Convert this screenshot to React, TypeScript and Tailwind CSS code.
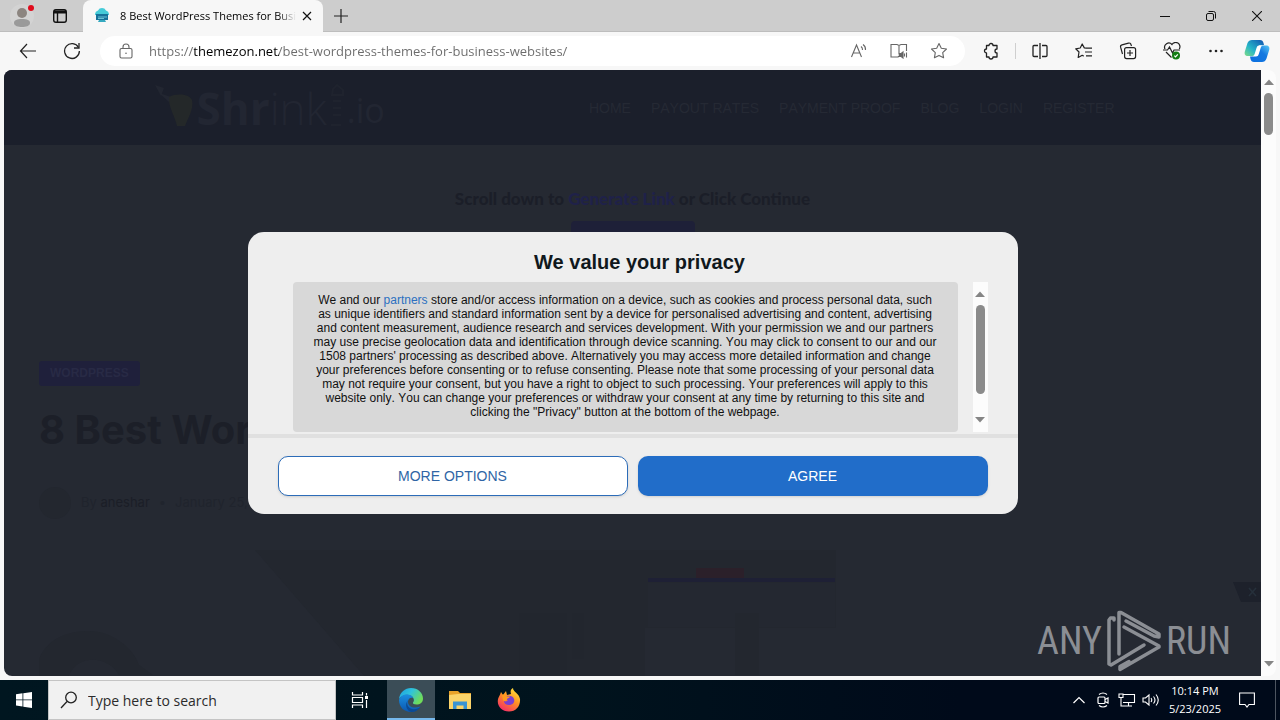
import { ReactNode, useState } from "react";

type IconButtonProps = {
    label: string,
    className?: string,
    children: ReactNode
}

const navLinks = ["HOME", "PAYOUT RATES", "PAYMENT PROOF", "BLOG", "LOGIN", "REGISTER"];

export default function App() {
    const [consentOpen, setConsentOpen] = useState<boolean>(true);

    return (
        <div className="flex h-screen flex-col overflow-hidden bg-[#f7f7f7] font-['Open_Sans',sans-serif]">
            <TabStrip />
            <Toolbar />
            <div className="mx-1 mb-1 flex min-h-0 flex-1">
                <div className="relative min-w-0 flex-1 overflow-hidden rounded-l-lg bg-[#252932]">
                    <Site />
                    {consentOpen && (
                        <div className="absolute inset-0 flex items-center justify-center">
                            <ConsentDialog hide={() => setConsentOpen(false)} />
                        </div>
                    )}
                    <Watermark />
                </div>
                <Scrollbar className="rounded-r-lg" thumb="h-[42px]" />
            </div>
            <Taskbar />
        </div>
    )
}

function IconButton(props: IconButtonProps) {
    return (
        <button type="button" aria-label={props.label} className={`flex shrink-0 items-center justify-center ${props.className ?? ""}`}>
            {props.children}
        </button>
    )
}

function TabStrip() {
    return (
        <div className="flex h-8 shrink-0 items-stretch border-b border-[#bdbdbd] bg-[#cdcdcd]">
            <IconButton label="Profile" className="w-11">
                <svg width="30" height="28" viewBox="0 0 30 28">
                    <circle cx="15" cy="14" r="12" fill="#d3d3d3" />
                    <circle cx="15" cy="11" r="5" fill="#8c8580" />
                    <path d="M7 21c0-3 3-4 8-4s8 1 8 4-4 4-8 4-8-1-8-4z" fill="#9a9a9a" />
                    <circle cx="24" cy="6" r="3" fill="#e00b1c" />
                </svg>
            </IconButton>
            <IconButton label="Tab actions" className="w-[31px]">
                <svg width="16" height="16" viewBox="0 0 16 16" fill="none" stroke="#111" strokeWidth="1.4">
                    <rect x="1.7" y="1.7" width="12.6" height="12.6" rx="2.2" />
                    <path d="M2 4h12" strokeWidth="3" />
                    <path d="M5.5 5v9" />
                </svg>
            </IconButton>
            <div className="ml-2 -mb-px flex w-60 items-center rounded-t-lg bg-[#f7f7f7] pl-[11px] pr-2">
                <svg width="16" height="16" viewBox="0 0 16 16" className="shrink-0">
                    <path d="M1 6a4 4 0 0 1 3-3.500A4.500 4.500 0 0 1 12 2.500 4 4 0 0 1 15 6v1H1z" fill="#45cbd8" />
                    <path d="M2 6h12v6H2z" fill="#17729a" />
                    <path d="M4 9h9M4 10.500h6" stroke="#7fd6e4" strokeWidth=".8" />
                    <path d="M5 12h6l1 2H4z" fill="#35a9c0" />
                </svg>
                <span className="ml-[10px] flex-1 overflow-hidden whitespace-nowrap text-[11px] leading-4 text-black [mask-image:linear-gradient(to_right,black_158px,transparent_176px)]">
                    8 Best WordPress Themes for Business Websites
                </span>
                <IconButton label="Close tab" className="size-4">
                    <svg width="10" height="10" viewBox="0 0 10 10" stroke="#111" strokeWidth="1.2">
                        <path d="M1 1l8 8M9 1l-8 8" />
                    </svg>
                </IconButton>
            </div>
            <IconButton label="New tab" className="w-9">
                <svg width="14" height="14" viewBox="0 0 14 14" stroke="#222" strokeWidth="1.2">
                    <path d="M7 0v14M0 7h14" />
                </svg>
            </IconButton>
            <div className="flex-1" />
            <IconButton label="Minimize" className="w-[46px]">
                <svg width="10" height="10" viewBox="0 0 10 10" stroke="#111"><path d="M0 5.500h10" /></svg>
            </IconButton>
            <IconButton label="Restore" className="w-[46px]">
                <svg width="10" height="10" viewBox="0 0 10 10" fill="none" stroke="#111">
                    <rect x=".5" y="2.500" width="7" height="7" rx="1.500" />
                    <path d="M2.500 .5h5a2 2 0 0 1 2 2v5" />
                </svg>
            </IconButton>
            <IconButton label="Close" className="w-[46px]">
                <svg width="10" height="10" viewBox="0 0 10 10" stroke="#111" strokeWidth="1.1"><path d="M0 0l10 10M10 0L0 10" /></svg>
            </IconButton>
        </div>
    )
}

function Toolbar() {
    return (
        <div className="flex h-[38px] shrink-0 items-center pl-2 text-[#222]">
            <IconButton label="Back" className="w-10">
                <svg width="18" height="16" viewBox="0 0 18 16" fill="none" stroke="currentColor" strokeWidth="1.2">
                    <path d="M17 8H1.500M8 1L1.500 8 8 15" />
                </svg>
            </IconButton>
            <IconButton label="Refresh" className="ml-1 w-10">
                <svg width="18" height="18" viewBox="0 0 18 18" fill="none" stroke="currentColor" strokeWidth="1.3">
                    <path d="M15.500 5.500A7.400 7.400 0 1 0 16.400 9" />
                    <path d="M16 1v5h-5" />
                </svg>
            </IconButton>
            <form className="ml-2 flex h-[30px] min-w-0 flex-1 items-center rounded-full bg-white pl-4 pr-[6px]" onSubmit={(e) => e.preventDefault()}>
                <IconButton label="View site information" className="w-5 text-[#666]">
                    <svg width="14" height="16" viewBox="0 0 14 16" fill="none" stroke="currentColor" strokeWidth="1.100">
                        <rect x="1" y="5.500" width="12" height="9.500" rx="1.500" />
                        <path d="M4 5.500V4a3 3 0 0 1 6 0v1.500" />
                        <circle cx="7" cy="10.200" r=".8" fill="currentColor" stroke="none" />
                    </svg>
                </IconButton>
                <input
                    type="text"
                    aria-label="Address and search bar"
                    defaultValue="https://themezon.net/best-wordpress-themes-for-business-websites/"
                    spellCheck={false}
                    className="ml-[13px] min-w-0 flex-1 bg-[linear-gradient(to_right,#6b6b6b_45px,#000_45px,#000_130px,#6b6b6b_130px)] bg-clip-text text-[13px] leading-5 text-transparent outline-none"
                />
                <IconButton label="Read aloud" className="w-10 text-[#666]">
                    <svg width="18" height="16" viewBox="0 0 18 16" fill="none" stroke="currentColor" strokeWidth="1.100">
                        <path d="M1.500 14L6.500 2l5 12M3.200 10h6.600" />
                        <path d="M11 3.500a4 4 0 0 1 1.500 3.500M13 1.500a6 6 0 0 1 2.500 5.500" />
                    </svg>
                </IconButton>
                <IconButton label="Immersive reader" className="w-10 text-[#666]">
                    <svg width="18" height="16" viewBox="0 0 18 16" fill="none" stroke="currentColor" strokeWidth="1.100">
                        <path d="M9 2.500v9M8 14H1V1.500h6l2 1 2-1h5.500V8M8 14l1-1" />
                        <path d="M9.500 10.500h1.700L13 9v6l-1.800-1.500H9.500z" fill="currentColor" />
                        <path d="M14.500 10.500v3M16.500 9.500v5" />
                    </svg>
                </IconButton>
                <IconButton label="Add to favorites" className="w-10 text-[#666]">
                    <svg width="18" height="18" viewBox="0 0 18 18" fill="none" stroke="currentColor" strokeWidth="1.100" strokeLinejoin="round">
                        <path d="M9 1.500l2.300 4.700 5.200.8-3.800 3.600.9 5.200L9 13.400l-4.600 2.400.9-5.200L1.500 7l5.200-.8z" />
                    </svg>
                </IconButton>
            </form>
            <IconButton label="Extensions" className="ml-2 w-9">
                <svg width="16" height="18" viewBox="0 0 16 18" fill="none" stroke="currentColor" strokeWidth="1.300" strokeLinejoin="round">
                    <path d="M3.500 3.500H6a2 2 0 0 1 4 0h4V7a2 2 0 0 0 0 4v4h-4a2 2 0 0 1-4 0H3.500v-4a2 2 0 0 1 0-4z" />
                </svg>
            </IconButton>
            <div className="ml-[6px] h-4 w-px bg-[#cfcfcf]" />
            <IconButton label="Split screen" className="ml-[6px] w-9">
                <svg width="16" height="16" viewBox="0 0 16 16" fill="none" stroke="currentColor" strokeWidth="1.300">
                    <path d="M6 2.500H2a1 1 0 0 0-1 1v9a1 1 0 0 0 1 1h4M10 2.500h4a1 1 0 0 1 1 1v9a1 1 0 0 1-1 1h-4M8 0v16" />
                </svg>
            </IconButton>
            <IconButton label="Favorites" className="ml-2 w-9">
                <svg width="18" height="16" viewBox="0 0 18 16" fill="none" stroke="currentColor" strokeWidth="1.200" strokeLinejoin="round">
                    <path d="M11 5.200l-1.700-.3L7.200 1 5.200 5l-4.500.8L4 9l-.8 5.500 4-2.200 1.500.8" />
                    <path d="M11 5.200h6M10 9h7M11 12.800h6" />
                </svg>
            </IconButton>
            <IconButton label="Collections" className="ml-2 w-9">
                <svg width="18" height="18" viewBox="0 0 18 18" fill="none" stroke="currentColor" strokeWidth="1.200">
                    <rect x="5.600" y="5.600" width="11" height="11" rx="2" />
                    <path d="M11 8v6M8 11h6M3.500 12L1.600 5.200a2 2 0 0 1 1.400-2.400l6.500-1.700a2 2 0 0 1 2.500 1.500L12.500 4" />
                </svg>
            </IconButton>
            <IconButton label="Browser essentials" className="ml-2 w-9">
                <svg width="18" height="18" viewBox="0 0 18 18" fill="none" stroke="currentColor" strokeWidth="1.200">
                    <path d="M2 7a4.200 4.200 0 0 1 7-4.500A4.200 4.200 0 0 1 16.300 7M3 10l5.500 5.500" />
                    <path d="M0 8h4.500L6.500 5l3 6 1.500-3h6" />
                    <circle cx="13" cy="13.500" r="4" fill="#137c13" stroke="none" />
                    <path d="M11.300 13.600l1.200 1.200 2.300-2.500" stroke="#fff" />
                </svg>
            </IconButton>
            <IconButton label="Settings and more" className="ml-2 w-9">
                <svg width="14" height="4" viewBox="0 0 14 4" fill="currentColor">
                    <circle cx="1.500" cy="2" r="1.300" /><circle cx="7" cy="2" r="1.300" /><circle cx="12.500" cy="2" r="1.300" />
                </svg>
            </IconButton>
            <IconButton label="Copilot" className="w-[46px]">
                <svg width="26" height="24" viewBox="0 0 26 24">
                    <defs>
                        <linearGradient id="copilotLeft" x1="0" y1="1" x2="1" y2="0">
                            <stop offset="0" stopColor="#7fdc86" /><stop offset=".4" stopColor="#25b5c8" /><stop offset="1" stopColor="#1152b0" />
                        </linearGradient>
                        <linearGradient id="copilotRight" x1="0" y1="1" x2="1" y2="0">
                            <stop offset="0" stopColor="#0a6fe0" /><stop offset=".6" stopColor="#1478e0" /><stop offset="1" stopColor="#59c9f5" />
                        </linearGradient>
                    </defs>
                    <path d="M8 1h8c2 0 3 1 3.500 3l.5 2h-3c-2 0-3 1-3.500 3l-1.500 5c-.5 2-1.500 3-4 3H4c-3 0-4-2-3-5l2.500-8C4.300 2 6 1 8 1z" fill="url(#copilotLeft)" />
                    <path d="M18 23h-8c-2 0-3-1-3.500-3L6 17.500h2.500c2 0 3-1 3.500-3l1.500-5c.5-2 1.500-3 4-3H22c3 0 4 2 3 5l-2.500 8c-.8 2.500-2.500 3.500-4.500 3.500z" fill="url(#copilotRight)" />
                    <path d="M12.500 9l-1.700 5.500c-.4 1.300-1 2.200-1.800 3h3c1.500 0 2.300-.8 2.800-2.500l1.700-5.500c.4-1.400.9-2.300 1.800-3h-3c-1.500 0-2.300.8-2.800 2.500z" fill="#fff" />
                </svg>
            </IconButton>
        </div>
    )
}

function Site() {
    return (
        <div className="flex flex-col">
            <header className="h-[75px] bg-[#1b1f2b] px-4">
                <div className="mx-auto flex h-full max-w-[964px] items-center justify-between">
                    <a href="#" className="flex items-center" aria-label="Shrinke.io">
                        <svg width="46" height="50" viewBox="0 0 46 50">
                            <path d="M8 10l12 4-2 5zM4 2l9 3-3 8z" fill="#222631" />
                            <path d="M18 14c8-4 20-3 23 3 2 9-4 18-7 26h-8c-2-10-9-19-8-29z" fill="#242829" />
                        </svg>
                        <span className="text-[44px] leading-[50px] text-[#222632]">
                            <span className="font-bold">Shr</span><span className="font-light">ink</span>
                        </span>
                        <svg width="20" height="50" viewBox="0 0 20 50" fill="none" stroke="#1f232e" strokeWidth="2">
                            <path d="M6 6l4-4 6 5v5H5zM6 18h8M6 25h8M6 32h8M4 42h10" />
                        </svg>
                        <span className="pt-1 text-[34px] leading-10 text-[#222632]">.io</span>
                    </a>
                    <nav className="flex gap-5 font-['Liberation_Sans',sans-serif] text-sm text-[#252934] [font-kerning:none]">
                        {navLinks.map((link) => <a key={link} href="#">{link}</a>)}
                    </nav>
                </div>
            </header>
            <div className="flex flex-col items-center pt-[42px]">
                <p className="font-['Lato',sans-serif] text-[17px] font-black leading-6 text-[#1b1e28]">
                    Scroll down to <a href="#" className="text-[#1f2149]">Generate Link</a> or Click Continue
                </p>
                <button type="button" aria-label="Continue" className="mt-[10px] h-10 w-[124px] rounded bg-[#1e2038]" />
            </div>
            <main className="mt-[100px] flex flex-col items-start pl-[35px]">
                <a href="#" className="rounded-[3px] bg-[#1f203b] px-[11px] font-['Liberation_Sans',sans-serif] text-[12px] font-bold leading-[25px] text-[#282a45]">WORDPRESS</a>
                <h1 className="mt-5 whitespace-nowrap font-['Inter',sans-serif] text-[40px] font-bold leading-[48px] text-[#1c1f28]">
                    8 Best WordPress Themes
                </h1>
                <div className="mt-[33px] flex h-8 items-center font-['Inter',sans-serif] text-[13px] text-[#20242d]">
                    <span className="size-8 rounded-full bg-[#23272f]" />
                    <span className="ml-[10px]">By <a href="#" className="text-[#1b1e27]">aneshar</a></span>
                    <span className="mx-[9px]">•</span>
                    <time>January 25, 2025</time>
                </div>
                <HeroImage />
            </main>
        </div>
    )
}

function HeroImage() {
    return (
        <svg width="797" height="160" viewBox="0 0 797 160" className="mt-7" aria-hidden="true">
            <path d="M216 3h581v78H606v79H352z" fill="#23272f" />
            <path d="M609 36h187v44H609z" fill="#242831" />
            <rect x="657" y="21" width="48" height="10" fill="#2b202a" />
            <rect x="609" y="31" width="187" height="4" fill="#1e2035" />
            <path d="M0 160V112c8-20 28-28 50-28s44 16 50 34l14 10H80c-8-16-38-24-50 0l-10 32z" fill="#23272f" />
            <path d="M480 66h48v62h-48zM533 66h12v46h-12z" fill="#22262e" />
            <path d="M696 66h24v62h-24z" fill="#23272f" />
        </svg>
    )
}

function ConsentDialog(props: { hide: () => void }) {
    return (
        <div role="dialog" aria-labelledby="consent-title" className="flex w-[770px] max-w-full flex-col rounded-2xl bg-[#eee] font-['Liberation_Sans',sans-serif]">
            <h2 id="consent-title" className="pl-8 pr-[18px] pt-[18px] text-center text-[20px] font-bold leading-6 text-[#10181c]">We value your privacy</h2>
            <div className="mt-2 flex justify-between pl-[45px] pr-[30px]">
                <p className="mr-[15px] h-[150px] flex-1 whitespace-nowrap rounded bg-[#d8d8d8] pt-[11px] text-center text-[12px] leading-[14px] text-[#111] [font-kerning:none]">
                    We and our <a href="#" className="text-[#2c70c0]">partners</a> store and/or access information on a device, such as cookies and process personal data, such<br />
                    as unique identifiers and standard information sent by a device for personalised advertising and content, advertising<br />
                    and content measurement, audience research and services development. With your permission we and our partners<br />
                    may use precise geolocation data and identification through device scanning. You may click to consent to our and our<br />
                    1508 partners' processing as described above. Alternatively you may access more detailed information and change<br />
                    your preferences before consenting or to refuse consenting. Please note that some processing of your personal data<br />
                    may not require your consent, but you have a right to object to such processing. Your preferences will apply to this<br />
                    website only. You can change your preferences or withdraw your consent at any time by returning to this site and<br />
                    clicking the "Privacy" button at the bottom of the webpage.
                </p>
                <Scrollbar thumb="h-[89px]" />
            </div>
            <div className="mt-[2px] grid grid-cols-2 gap-[10px] border-t-4 border-[#e0e0e0] px-[30px] pb-[18px] pt-[18px] text-sm">
                <button type="button" className="h-10 rounded-[10px] border border-[#2c6cb8] bg-white text-[#2f65a5] shadow-sm">MORE OPTIONS</button>
                <button type="button" onClick={props.hide} className="h-10 rounded-[10px] bg-[#216dc9] text-white shadow-sm">AGREE</button>
            </div>
        </div>
    )
}

function Scrollbar(props: { thumb: string, className?: string }) {
    return (
        <div className={`flex w-[15px] shrink-0 flex-col items-center bg-[#fcfcfc] pb-[9px] pt-[9px] ${props.className ?? ""}`} aria-hidden="true">
            <svg width="10" height="6" viewBox="0 0 10 6" fill="#858585"><path d="M0 6l5-5.500L10 6z" /></svg>
            <div className={`mt-2 w-[9px] rounded-full bg-[#8b8b8b] ${props.thumb}`} />
            <div className="flex-1" />
            <svg width="10" height="6" viewBox="0 0 10 6" fill="#858585"><path d="M0 0l5 5.500L10 0z" /></svg>
        </div>
    )
}

function Watermark() {
    return (
        <>
            <div className="absolute bottom-[74px] right-0 flex">
                <svg width="28" height="20" viewBox="0 0 28 20" aria-hidden="true">
                    <path d="M0 0h28v20H8z" fill="#1d212b" />
                    <path d="M16 6l7 8M23 6l-7 8" stroke="#26303b" strokeWidth="1.500" />
                </svg>
            </div>
            <div className="absolute bottom-1 right-[30px] flex items-center gap-1 font-['Roboto_Condensed','Liberation_Sans_Narrow','Roboto',sans-serif] text-[38px] leading-[62px] text-[#8b8e94]">
                <span>ANY</span>
                <svg width="56" height="62" viewBox="0 0 56 62" fill="none" stroke="#8b8e94" strokeWidth="3.500" strokeLinejoin="round" strokeLinecap="round">
                    <path d="M13 44V2.500h2l38 21.500v3l-5-1-28-15" />
                    <path d="M8 10V8H4.500L3 10v44l2 1 33-20" />
                    <path d="M18 17l35 19v1L14 59.500v-3l9-5" />
                </svg>
                <span>RUN</span>
            </div>
        </>
    )
}

function Taskbar() {
    return (
        <footer className="flex h-10 shrink-0 items-stretch bg-[linear-gradient(to_right,#001620,#00131d_45%,#000a1a_75%)] text-white">
            <IconButton label="Start" className="w-12">
                <svg width="16" height="16" viewBox="0 0 16 16" fill="#fff">
                    <path d="M0 2.200L6.500 1.300v6.200H0zM7.300 1.200L16 0v7.500H7.300zM0 8.300h6.500v6.200L0 13.600zM7.300 8.300H16V16l-8.700-1.200z" />
                </svg>
            </IconButton>
            <label className="flex w-72 items-center border border-[#c4c4c4] bg-[#f1f1f1] pl-[11px]">
                <svg width="18" height="18" viewBox="0 0 18 18" fill="none" stroke="#222" strokeWidth="1.300">
                    <circle cx="11" cy="6.500" r="5.300" />
                    <path d="M7 10.500L1 17" />
                </svg>
                <input type="search" aria-label="Search" placeholder="Type here to search" className="ml-[10px] min-w-0 flex-1 text-[14px] text-black outline-none placeholder:text-[#2b2b2b]" />
            </label>
            <IconButton label="Task view" className="w-12">
                <svg width="18" height="16" viewBox="0 0 18 16" fill="none" stroke="#fff" strokeWidth="1.200">
                    <path d="M1.500 0v3h10V0M1.500 16v-3h10v3M1.500 5.500h10v5h-10zM15.500 1v2.500M15.500 8v8" />
                    <path d="M14 4h3v3h-3z" fill="#fff" stroke="none" />
                </svg>
            </IconButton>
            <IconButton label="Microsoft Edge" className="ml-[3px] w-12 border-b-2 border-[#76b9ed] bg-[#3b4d57] pt-[2px]">
                <svg width="24" height="24" viewBox="0 0 24 24">
                    <defs>
                        <linearGradient id="edgeTop" x1="0" y1="0" x2="1" y2=".5">
                            <stop offset="0" stopColor="#1c9fe0" /><stop offset=".5" stopColor="#2fc3dc" /><stop offset="1" stopColor="#6fdc5a" />
                        </linearGradient>
                        <linearGradient id="edgeBody" x1="0" y1="0" x2="0" y2="1">
                            <stop offset="0" stopColor="#1b8fe0" /><stop offset="1" stopColor="#0b57b0" />
                        </linearGradient>
                    </defs>
                    <path d="M0 11C1 4 6 0 12 0c7 0 12 5 12 10.500 0 4-3 6-6.500 6-2.500 0-4-1-3.500-2 1.500-1.500 1-3.500 0-5C11 5 3 6 0 11z" fill="url(#edgeTop)" />
                    <path d="M0 12C1 8 5 6 9 6.500c3 .3 5 2 5 3.500-3-1-5 1-5 4 0 5 6 7 12.500 4.500C19 22 16 24 12 24 5 24 0 19 0 12z" fill="url(#edgeBody)" />
                    <path d="M9 12c-2 4 0 8 4 9 3 .8 6 0 8.500-2.500-2 3.500-5 5.500-9 5.500-4.500-1-7.500-7-3.500-12z" fill="#0c4a94" />
                </svg>
            </IconButton>
            <IconButton label="File Explorer" className="w-[49px]">
                <svg width="22" height="20" viewBox="0 0 22 20">
                    <path d="M0 1h9l2 2h11v16H0z" fill="#e9a32a" />
                    <path d="M0 5l9-1h13v15H0z" fill="#fbd46a" />
                    <path d="M4 11.500h14V19h-3.500v-3.500h-7V19H4z" fill="#3a94d4" />
                </svg>
            </IconButton>
            <IconButton label="Firefox" className="w-[49px]">
                <svg width="24" height="24" viewBox="0 0 24 24">
                    <defs>
                        <linearGradient id="fox" x1=".8" y1="0" x2=".2" y2="1">
                            <stop offset="0" stopColor="#ffe53e" /><stop offset=".45" stopColor="#ff9122" /><stop offset="1" stopColor="#f5266c" />
                        </linearGradient>
                    </defs>
                    <path d="M4 4l2 3 3-4 1 4 4-1c-1-3 0-5 2-6 0 4 6 5 7 11 .6 7-4 12.500-11 12.500S.5 18.500.8 13C1 9 3 8 4 4z" fill="url(#fox)" />
                    <path d="M8 9c2-2 8-2 9 2 1 3-1 6-5 6-3 0-5-1.500-5-4 2 1 3 0 4-1-2 0-3-1-3-3z" fill="#7a3fd0" />
                    <path d="M5 7c2-1 4 0 5 1.500h3c0 1.500-3 1.500-3 3 0 1-2 2-4 1z" fill="#ff9a1f" />
                </svg>
            </IconButton>
            <div className="flex-1" />
            <IconButton label="Show hidden icons" className="w-6">
                <svg width="12" height="8" viewBox="0 0 12 8" fill="none" stroke="#fff" strokeWidth="1.200"><path d="M.5 7L6 1.500 11.500 7" /></svg>
            </IconButton>
            <IconButton label="Meet now" className="w-6">
                <svg width="14" height="16" viewBox="0 0 14 16" fill="none" stroke="#fff" strokeWidth="1.200">
                    <rect x="2" y="5" width="7" height="6.500" rx="1" />
                    <path d="M9 7.500l3-1.500v5L9 9.500M3 2.500Q7-.5 11 2.500M3 13.500q4 3 8 0" />
                </svg>
            </IconButton>
            <IconButton label="Network" className="w-6">
                <svg width="18" height="14" viewBox="0 0 18 14" fill="none" stroke="#fff" strokeWidth="1.100">
                    <path d="M5 1.500h11.500v8H5M3 5v8h4M10.500 10v3M7 13h7" />
                    <path d="M1 1h4v3.500H1z" />
                </svg>
            </IconButton>
            <IconButton label="Volume" className="w-6">
                <svg width="18" height="14" viewBox="0 0 18 14" fill="none" stroke="#fff" strokeWidth="1.100">
                    <path d="M1 5v4h2.500L7 12V2L3.500 5zM9 5q1.500 2 0 4M11.500 3.500q3 3.500 0 7M14 1.500q4.500 5.500 0 11" />
                </svg>
            </IconButton>
            <div className="flex w-16 flex-col justify-center text-center text-[11px] leading-[18px]">
                <span className="whitespace-nowrap">10:14 PM</span>
                <span className="whitespace-nowrap">5/23/2025</span>
            </div>
            <IconButton label="Notifications" className="w-10">
                <svg width="16" height="16" viewBox="0 0 16 16" fill="none" stroke="#fff" strokeWidth="1.100">
                    <path d="M.6 1h14.800v11.500H10L8 15l-2-2.500H.6z" />
                </svg>
            </IconButton>
            <div className="ml-2 w-[5px] border-l border-[#4d5560]" />
        </footer>
    )
}
